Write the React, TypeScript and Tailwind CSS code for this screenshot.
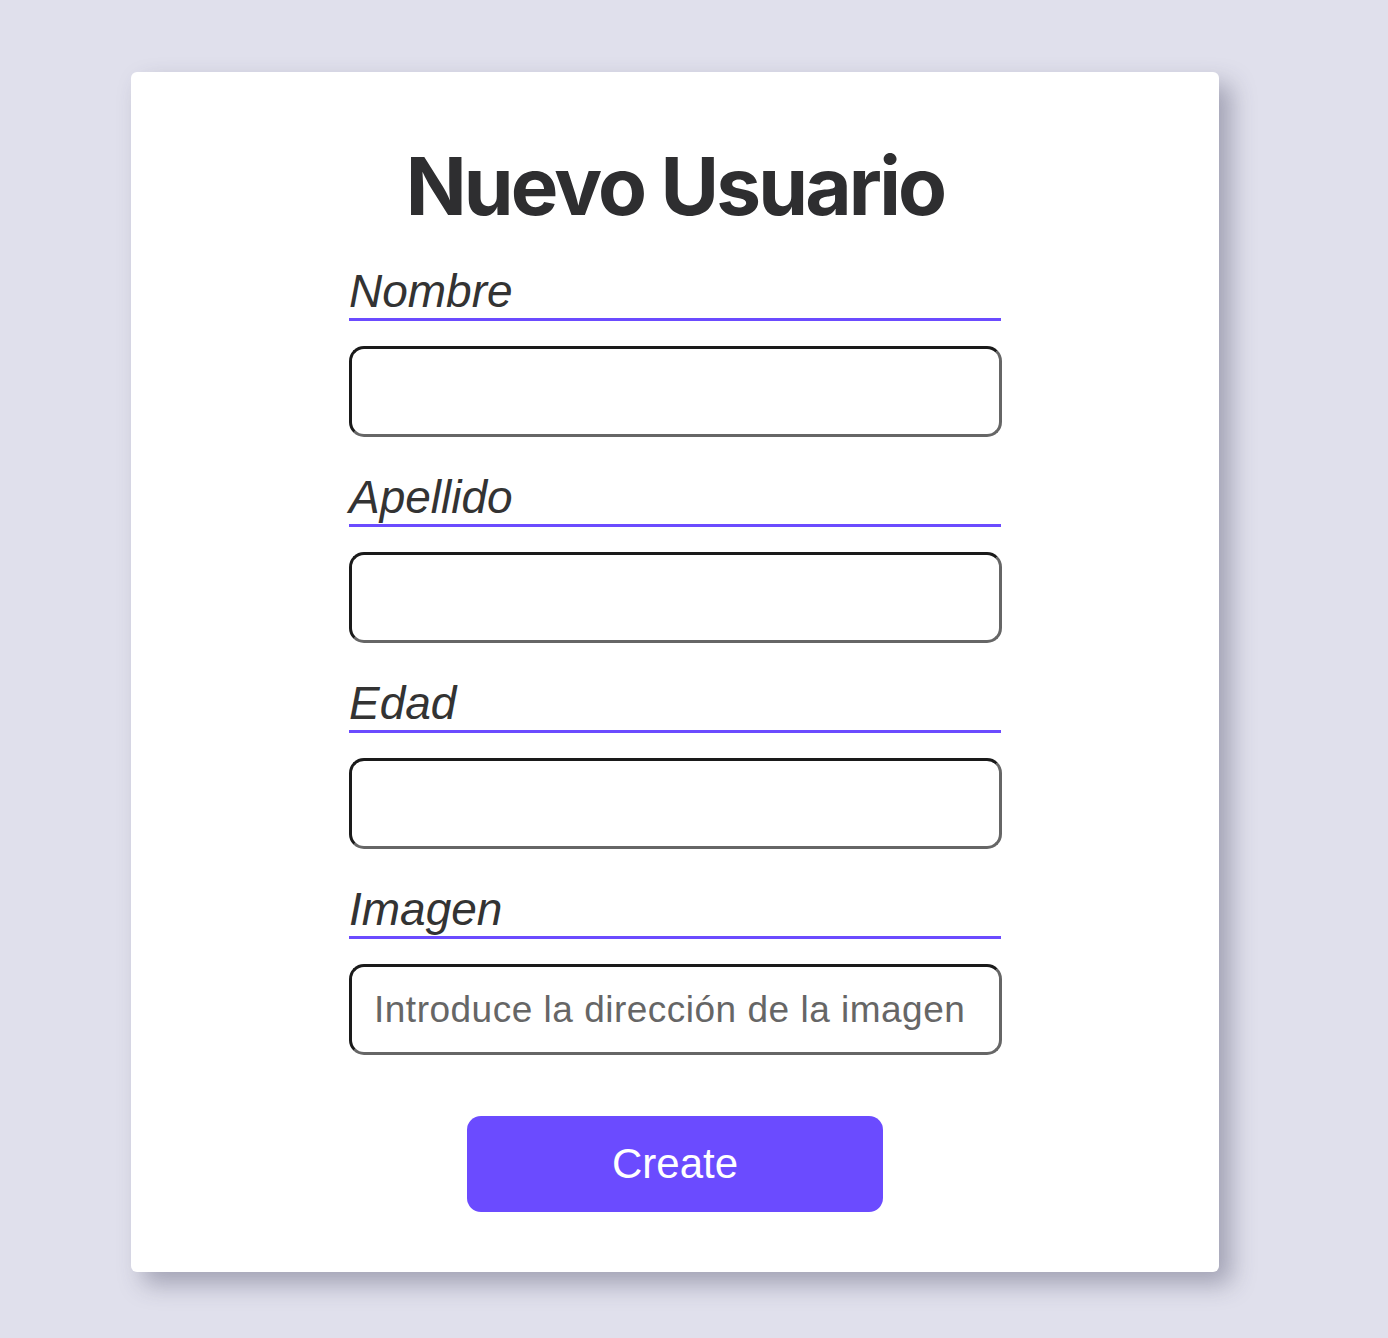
import React from "react";

const fields = [
  { label: "Nombre", placeholder: "" },
  { label: "Apellido", placeholder: "" },
  { label: "Edad", placeholder: "" },
  { label: "Imagen", placeholder: "Introduce la dirección de la imagen" },
];

export default function App() {
  return (
    <div className="min-h-[1338px] w-full bg-[#e0e0ec] pt-[72px] pl-[131px]">
      <div className="w-[1088px] h-[1200px] rounded-[6px] bg-white shadow-[12px_12px_24px_rgba(60,60,90,0.38)] pt-[74px] flex flex-col items-center">
        <h1 className="font-['Inter',sans-serif] font-bold text-[80px] leading-none tracking-[-0.035em] text-[#2e2e30]">
          Nuevo Usuario
        </h1>
        <form className="w-[652px] mt-[42px] flex flex-col">
          {fields.map((f, i) => (
            <div key={f.label} className={i === 0 ? "" : "mt-[37px]"}>
              <label className="block font-['Liberation_Sans',Arial,sans-serif] italic text-[46px] leading-none text-[#333]">
                {f.label}
              </label>
              <div className="mt-[4px] h-[3px] bg-[#6b4bff]" />
              <input
                type="text"
                placeholder={f.placeholder}
                className="mt-[25px] block w-[653px] h-[91px] rounded-[15px] border-[3px] border-t-[#1a1a1a] border-l-[#1a1a1a] border-r-[#666] border-b-[#666] bg-white px-[22px] font-['Liberation_Sans',Arial,sans-serif] text-[37px] tracking-[0.5px] text-[#333] placeholder:text-[#666] outline-none"
              />
            </div>
          ))}
          <button
            type="button"
            className="self-center mt-[61px] w-[416px] h-[96px] rounded-[14px] bg-[#6b4bff] text-white font-['Liberation_Sans',Arial,sans-serif] text-[42px] leading-none"
          >
            Create
          </button>
        </form>
      </div>
    </div>
  );
}
